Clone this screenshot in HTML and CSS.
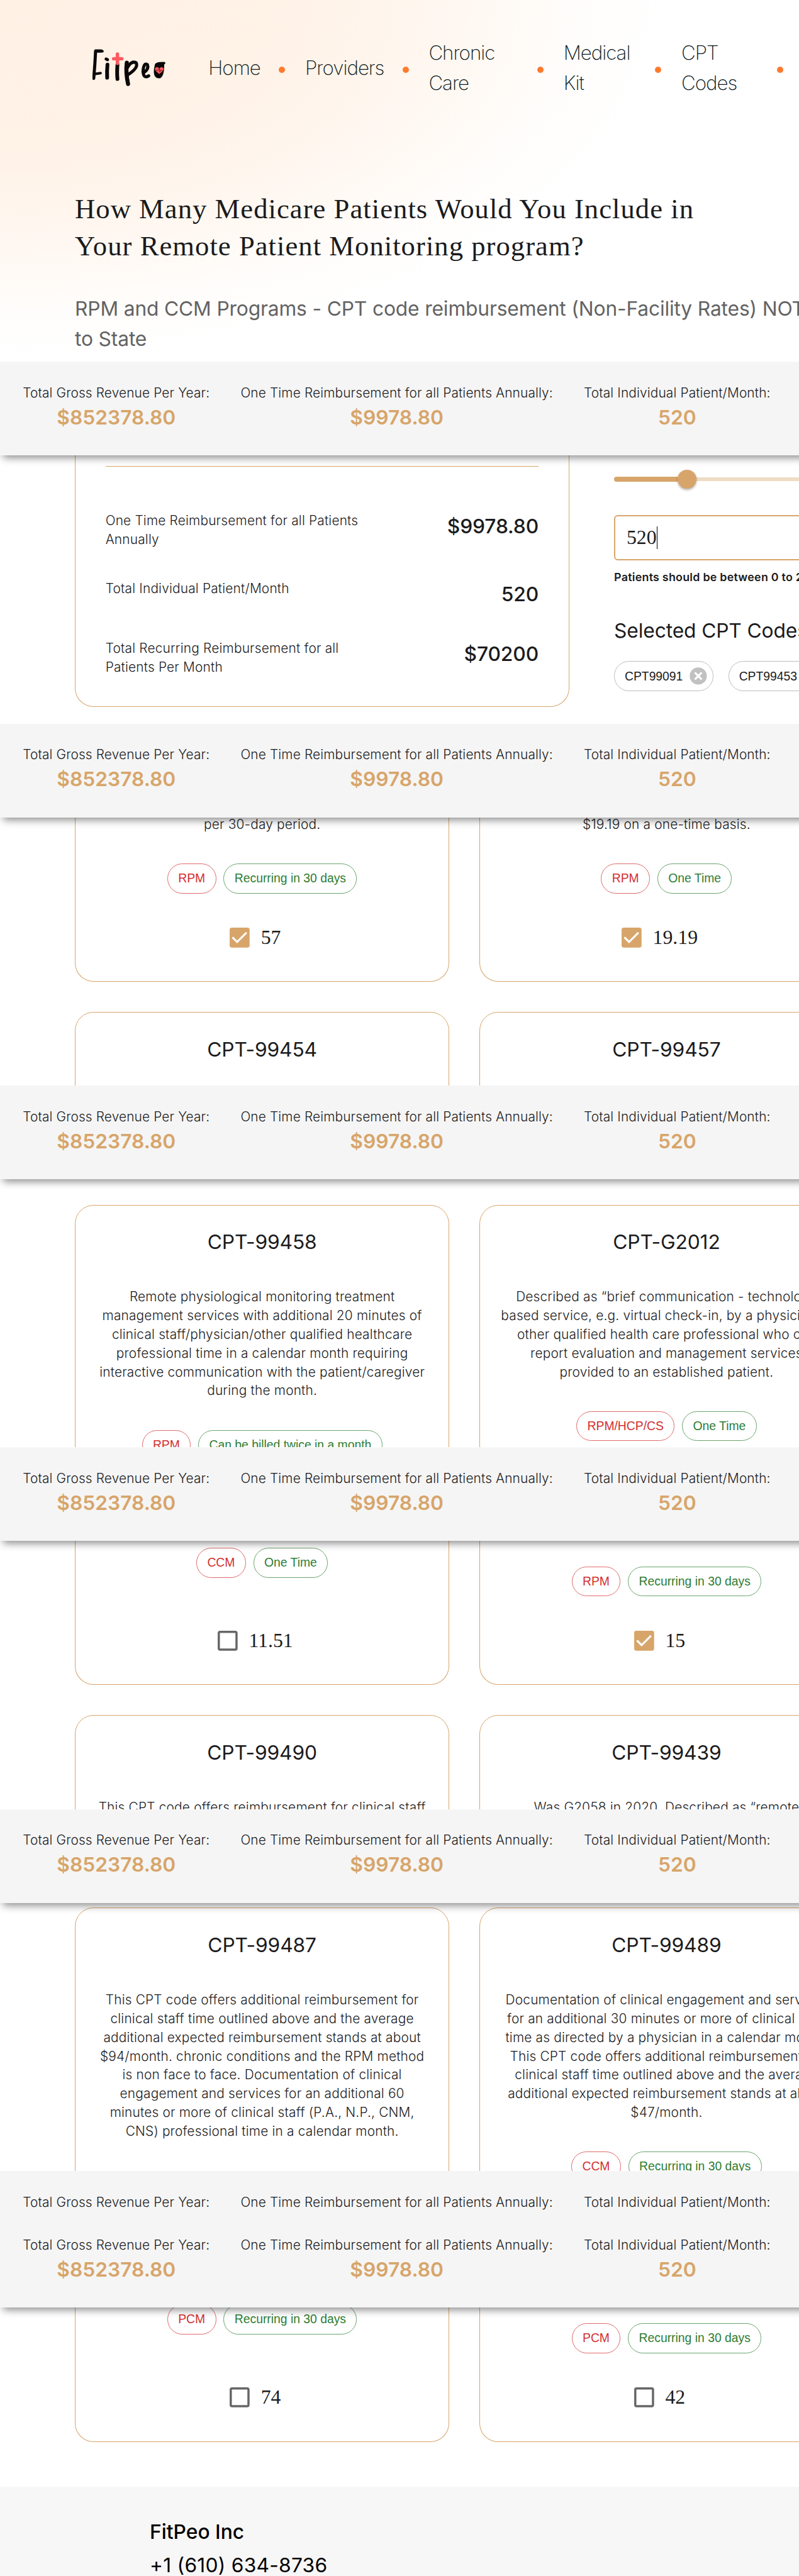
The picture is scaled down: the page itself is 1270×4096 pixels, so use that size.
FILE: index.html
```html
<!DOCTYPE html>
<html lang="en">
<head>
<meta charset="utf-8">
<title>FitPeo – Revenue Calculator</title>
<link rel="stylesheet" href="styles.css">
</head>
<body>
<div class="page">
  <header class="hero">
    <nav class="nav">
      <svg class="logo" viewBox="0 0 118 64" role="img" aria-label="FitPeo">
        <g fill="none" stroke="#0a0808" stroke-linecap="round" stroke-linejoin="round">
          <path d="M14 3 L5 3 Q4 25 2 47" stroke-width="5"/>
          <path d="M5 3.500H16" stroke-width="4"/>
          <path d="M3 40L13 38.500" stroke-width="4"/>
          <path d="M24 25Q23 35 23.500 46" stroke-width="6"/>
          <path d="M22 16L24 17" stroke-width="5"/>
          <path d="M40 25Q39 38 40 48" stroke-width="6"/>
          <path d="M55 22Q53 38 57 56" stroke-width="6.500"/>
          <path d="M56 30Q62 18 70 22Q74 30 57 41" stroke-width="5"/>
          <path d="M82 38Q91 32 88 25Q82 21 81 36Q82 48 90 43" stroke-width="5"/>
          <path d="M102 25Q97 45 107 45Q113 44 113 25Z" stroke-width="4" fill="#0a0808"/>
          <path d="M103 24Q106 22 115 22.500" stroke-width="3.500"/>
        </g>
        <path d="M40 8V23M34 15.500H47" stroke="#ff5a60" stroke-width="5.500" stroke-linecap="round"/>
        <path d="M107 40Q100 35 100 31Q103 27 107 31Q111 27 114 31Q114 35 107 40Z" fill="#ff5a60"/>
        <path d="M102 34H105L107 31L108 37L109 34H112" fill="none" stroke="#311" stroke-width=".8"/>
      </svg>
      <a class="link home">Home</a><i class="dot"></i>
      <a class="link providers">Providers</a><i class="dot"></i>
      <a class="link chronic">Chronic<br>Care</a><i class="dot"></i>
      <a class="link medical">Medical<br>Kit</a><i class="dot"></i>
      <a class="link codes">CPT<br>Codes</a><i class="dot"></i>
    </nav>
    <h1 class="headline">How Many Medicare Patients Would You Include in<br>Your Remote Patient Monitoring program?</h1>
    <p class="sub">RPM and CCM Programs - CPT code reimbursement (Non-Facility Rates) NOT<br>to State</p>
  </header>

  <div class="bar">
    <div class="stat"><span class="label">Total Gross Revenue Per Year:</span><b class="value">$852378.80</b></div>
    <div class="stat"><span class="label">One Time Reimbursement for all Patients Annually:</span><b class="value">$9978.80</b></div>
    <div class="stat"><span class="label">Total Individual Patient/Month:</span><b class="value">520</b></div>
  </div>

  <section class="slice calc">
    <div class="panel">
      <hr class="rule">
      <div class="row"><span class="what">One Time Reimbursement for all Patients Annually</span><span class="amount">$9978.80</span></div>
      <div class="row single"><span class="what">Total Individual Patient/Month</span><span class="amount">520</span></div>
      <div class="row"><span class="what narrow">Total Recurring Reimbursement for all Patients Per Month</span><span class="amount">$70200</span></div>
    </div>
    <div class="controls">
      <div class="slider"><div class="track"></div><div class="thumb"></div><div class="rail"></div></div>
      <div class="field"><span class="typed">520</span><i class="caret"></i></div>
      <p class="hint">Patients should be between 0 to 2000</p>
      <h2 class="selected">Selected CPT Codes:</h2>
      <div class="picked">
        <span class="pick">CPT99091<svg class="x" viewBox="0 0 28 28"><circle cx="14" cy="14" r="13.700" fill="#c1c1c1"/><path d="M8.500 8.500L19.500 19.500M19.500 8.500L8.500 19.500" stroke="#fff" stroke-width="3.200"/></svg></span>
        <span class="pick">CPT99453<svg class="x" viewBox="0 0 28 28"><circle cx="14" cy="14" r="13.700" fill="#c1c1c1"/><path d="M8.500 8.500L19.500 19.500M19.500 8.500L8.500 19.500" stroke="#fff" stroke-width="3.200"/></svg></span>
      </div>
    </div>
  </section>

  <div class="bar">
    <div class="stat"><span class="label">Total Gross Revenue Per Year:</span><b class="value">$852378.80</b></div>
    <div class="stat"><span class="label">One Time Reimbursement for all Patients Annually:</span><b class="value">$9978.80</b></div>
    <div class="stat"><span class="label">Total Individual Patient/Month:</span><b class="value">520</b></div>
  </div>

  <section class="slice">
    <div class="cards">
      <article class="card tail first">
        <p class="desc">per 30-day period.</p>
        <div class="tags"><span class="tag red">RPM</span><span class="tag green">Recurring in 30 days</span></div>
        <div class="check"><svg class="box" viewBox="0 0 32 32"><rect width="32" height="32" rx="3.500" fill="#d7a56a"/><path d="M4.500 15.500L12 23L27 8" fill="none" stroke="#fff" stroke-width="3.200"/></svg>57</div>
      </article>
      <article class="card tail first">
        <p class="desc">$19.19 on a one-time basis.</p>
        <div class="tags"><span class="tag red">RPM</span><span class="tag green">One Time</span></div>
        <div class="check"><svg class="box" viewBox="0 0 32 32"><rect width="32" height="32" rx="3.500" fill="#d7a56a"/><path d="M4.500 15.500L12 23L27 8" fill="none" stroke="#fff" stroke-width="3.200"/></svg>19.19</div>
      </article>
    </div>
    <div class="cards next">
      <article class="card open"><h3 class="code">CPT-99454</h3></article>
      <article class="card open"><h3 class="code">CPT-99457</h3></article>
    </div>
  </section>

  <div class="bar">
    <div class="stat"><span class="label">Total Gross Revenue Per Year:</span><b class="value">$852378.80</b></div>
    <div class="stat"><span class="label">One Time Reimbursement for all Patients Annually:</span><b class="value">$9978.80</b></div>
    <div class="stat"><span class="label">Total Individual Patient/Month:</span><b class="value">520</b></div>
  </div>

  <section class="slice physio">
    <div class="cards">
      <article class="card open">
        <h3 class="code">CPT-99458</h3>
        <p class="desc">Remote physiological monitoring treatment<br>management services with additional 20 minutes of<br>clinical staff/physician/other qualified healthcare<br>professional time in a calendar month requiring<br>interactive communication with the patient/caregiver<br>during the month.</p>
        <div class="tags"><span class="tag red">RPM</span><span class="tag green">Can be billed twice in a month</span></div>
      </article>
      <article class="card open">
        <h3 class="code">CPT-G2012</h3>
        <p class="desc">Described as “brief communication - technology<br>based service, e.g. virtual check-in, by a physician or<br>other qualified health care professional who can<br>report evaluation and management services<br>provided to an established patient.</p>
        <div class="tags"><span class="tag red">RPM/HCP/CS</span><span class="tag green">One Time</span></div>
      </article>
    </div>
  </section>

  <div class="bar">
    <div class="stat"><span class="label">Total Gross Revenue Per Year:</span><b class="value">$852378.80</b></div>
    <div class="stat"><span class="label">One Time Reimbursement for all Patients Annually:</span><b class="value">$9978.80</b></div>
    <div class="stat"><span class="label">Total Individual Patient/Month:</span><b class="value">520</b></div>
  </div>

  <section class="slice">
    <div class="cards">
      <article class="card tail ccm">
        <div class="tags"><span class="tag red">CCM</span><span class="tag green">One Time</span></div>
        <div class="check"><svg class="box" viewBox="0 0 32 32"><rect x="1.800" y="1.800" width="28.400" height="28.400" rx="2" fill="none" stroke="#666" stroke-width="3.500"/></svg>11.51</div>
      </article>
      <article class="card tail ccm">
        <div class="tags"><span class="tag red">RPM</span><span class="tag green">Recurring in 30 days</span></div>
        <div class="check"><svg class="box" viewBox="0 0 32 32"><rect width="32" height="32" rx="3.500" fill="#d7a56a"/><path d="M4.500 15.500L12 23L27 8" fill="none" stroke="#fff" stroke-width="3.200"/></svg>15</div>
      </article>
    </div>
    <div class="cards next">
      <article class="card open"><h3 class="code">CPT-99490</h3><p class="desc">This CPT code offers reimbursement for clinical staff</p></article>
      <article class="card open"><h3 class="code">CPT-99439</h3><p class="desc">Was G2058 in 2020. Described as “remote</p></article>
    </div>
  </section>

  <div class="bar">
    <div class="stat"><span class="label">Total Gross Revenue Per Year:</span><b class="value">$852378.80</b></div>
    <div class="stat"><span class="label">One Time Reimbursement for all Patients Annually:</span><b class="value">$9978.80</b></div>
    <div class="stat"><span class="label">Total Individual Patient/Month:</span><b class="value">520</b></div>
  </div>

  <section class="slice chronic-codes">
    <div class="cards">
      <article class="card open">
        <h3 class="code">CPT-99487</h3>
        <p class="desc">This CPT code offers additional reimbursement for<br>clinical staff time outlined above and the average<br>additional expected reimbursement stands at about<br>$94/month. chronic conditions and the RPM method<br>is non face to face. Documentation of clinical<br>engagement and services for an additional 60<br>minutes or more of clinical staff (P.A., N.P., CNM,<br>CNS) professional time in a calendar month.</p>
      </article>
      <article class="card open">
        <h3 class="code">CPT-99489</h3>
        <p class="desc">Documentation of clinical engagement and services<br>for an additional 30 minutes or more of clinical staff<br>time as directed by a physician in a calendar month.<br>This CPT code offers additional reimbursement for<br>clinical staff time outlined above and the average<br>additional expected reimbursement stands at about<br>$47/month.</p>
        <div class="tags"><span class="tag red">CCM</span><span class="tag green">Recurring in 30 days</span></div>
      </article>
    </div>
  </section>

  <div class="bar cut">
    <div class="stat"><span class="label">Total Gross Revenue Per Year:</span></div>
    <div class="stat"><span class="label">One Time Reimbursement for all Patients Annually:</span></div>
    <div class="stat"><span class="label">Total Individual Patient/Month:</span></div>
  </div>
  <div class="bar">
    <div class="stat"><span class="label">Total Gross Revenue Per Year:</span><b class="value">$852378.80</b></div>
    <div class="stat"><span class="label">One Time Reimbursement for all Patients Annually:</span><b class="value">$9978.80</b></div>
    <div class="stat"><span class="label">Total Individual Patient/Month:</span><b class="value">520</b></div>
  </div>

  <section class="slice last">
    <div class="cards">
      <article class="card tail pcm">
        <div class="tags"><span class="tag red">PCM</span><span class="tag green">Recurring in 30 days</span></div>
        <div class="check"><svg class="box" viewBox="0 0 32 32"><rect x="1.800" y="1.800" width="28.400" height="28.400" rx="2" fill="none" stroke="#666" stroke-width="3.500"/></svg>74</div>
      </article>
      <article class="card tail pcm">
        <div class="tags"><span class="tag red">PCM</span><span class="tag green">Recurring in 30 days</span></div>
        <div class="check"><svg class="box" viewBox="0 0 32 32"><rect x="1.800" y="1.800" width="28.400" height="28.400" rx="2" fill="none" stroke="#666" stroke-width="3.500"/></svg>42</div>
      </article>
    </div>
  </section>

  <footer class="footer">
    <strong class="company">FitPeo Inc</strong>
    <span class="phone">+1 (610) 634-8736</span>
  </footer>
</div>
</body>
</html>
```

FILE: styles.css
```css
* { box-sizing: border-box; }
body { margin: 0; background: #fff; overflow: hidden; }
.page {
  width: 1281px;
  height: 4129px;
  overflow: hidden;
  zoom: 0.992;
  font-family: Inter, "Liberation Sans", sans-serif;
  color: #1b1b1d;
}

/* header and intro */
.hero {
  height: 580px;
  padding: 64px 0 0 120px;
  overflow: hidden;
  background: radial-gradient(ellipse 1060px 570px at 0 0, #fff1e4 0, #fff2e7 42%, #fff7f0 66%, #fffdfb 88%, #fff 100%);
}
.nav { display: flex; align-items: center; width: 1400px; height: 96px; }
.logo { flex: none; width: 118px; height: 64px; margin: 0 68px 2px 28px; }
.link { flex: none; padding-bottom: 5px; font-size: 31.500px; line-height: 48px; font-weight: 200; color: #0c1a20; letter-spacing: -1px; }
.home { width: 113px; }
.providers { width: 156px; }
.chronic { width: 174px; }
.medical { width: 147px; }
.codes { width: 153px; }
.dot { flex: none; width: 10px; height: 10px; margin-right: 32px; border-radius: 50%; background: #ff7a2f; }
.headline {
  margin: 145px 0 0;
  font: 400 45px/60px "Liberation Serif", serif;
  letter-spacing: 1.05px;
  white-space: nowrap;
  color: #1b1b1d;
}
.sub { margin: 46px 0 0; font-size: 32px; line-height: 48px; font-weight: 400; letter-spacing: -.15px; white-space: nowrap; color: #636363; }

/* sticky totals */
.bar {
  position: relative;
  z-index: 1;
  display: flex;
  gap: 49.500px;
  height: 150px;
  margin-right: -20px;
  padding: 35px 0 0 36.500px;
  background: #f5f5f5;
  box-shadow: 0 9px 12px -5px rgba(0,0,0,.45);
  clip-path: inset(0 0 -40px 0);
}
.bar.cut { height: 69px; box-shadow: none; }
.stat { display: flex; flex: none; flex-direction: column; align-items: center; }
.label { font-size: 21px; line-height: 30px; font-weight: 300; letter-spacing: .007em; white-space: nowrap; }
.value { font-size: 32px; line-height: 48px; font-weight: 600; color: #d7a56a; }

/* calculator */
.slice { height: 430px; overflow: hidden; }
.calc { display: flex; gap: 72px; padding-left: 120px; }
.panel {
  flex: none;
  width: 792px;
  height: 403px;
  padding: 17px 48px 0;
  border: 1px solid #d7a56a;
  border-top: 0;
  border-radius: 0 0 30px 30px;
}
.rule { height: 1px; margin: 0; border: 0; background: #d7a56a; }
.row { display: flex; justify-content: space-between; height: 96px; }
.rule + .row { height: 180px; padding-top: 72px; }
.what { width: 416px; font-size: 21px; line-height: 30px; font-weight: 300; letter-spacing: .00938em; }
.what.narrow { width: 385px; }
.amount { font-size: 32px; line-height: 48px; font-weight: 500; letter-spacing: -.1px; }
.controls { flex: none; width: 640px; }
.slider { display: flex; align-items: center; height: 30px; margin-top: 23px; }
.track { width: 102px; height: 8px; border-radius: 4px 0 0 4px; background: #d7a56a; }
.thumb { z-index: 1; width: 30px; height: 30px; margin-right: -2px; border-radius: 50%; background: #d7a56a; box-shadow: 0 2px 4px rgba(0,0,0,.3); }
.rail { flex: 1; height: 6px; background: #efdcc5; }
.field { display: flex; align-items: center; height: 72px; margin-top: 43px; padding-left: 18px; border: 3px solid #d7a56a; border-radius: 6px; font: 32px/36px "Liberation Serif", serif; }
.caret { width: 1px; height: 36px; background: #000; }
.hint { margin: 12px 0 0; font-size: 18px; line-height: 30px; font-weight: 600; letter-spacing: .25px; }
.selected { margin: 47px 0 0; font-size: 32px; line-height: 48px; font-weight: 400; letter-spacing: -.12px; }
.picked { display: flex; gap: 24px; margin-top: 25px; }
.pick { display: flex; align-items: center; gap: 11px; height: 48px; padding: 0 9px 0 16px; border: 1px solid #bdbdbd; border-radius: 24px; font: 19.500px "Liberation Sans", sans-serif; }
.x { width: 28px; height: 28px; }

/* code cards */
.cards { display: flex; gap: 48px; padding-left: 120px; }
.cards.next { margin-top: 48px; }
.card { flex: none; width: 600px; border: 1px solid #d7a56a; border-radius: 30px; text-align: center; }
.card.tail { display: flex; flex-direction: column; justify-content: flex-end; padding-bottom: 54px; border-top: 0; border-radius: 0 0 30px 30px; }
.card.open { height: 520px; padding-top: 35px; }
.card.first { height: 264px; }
.card.ccm { height: 231px; }
.card.pcm { height: 215px; }
.code { margin: 0; font-size: 32px; line-height: 48px; font-weight: 400; letter-spacing: -.12px; }
.desc { margin: 0; font-size: 21px; line-height: 30px; font-weight: 300; letter-spacing: .00938em; white-space: nowrap; }
.code + .desc { margin-top: 49px; }
.tags { display: flex; justify-content: center; gap: 12px; margin-top: 48px; }
.tag { height: 48px; padding: 0 16.500px; border: 1px solid; border-radius: 24px; font: 19.500px/46px "Liberation Sans", sans-serif; }
.red { border-color: #e06b6b; color: #d32f2f; }
.green { border-color: #6aa56d; color: #2e7d32; }
.check { display: flex; align-items: center; justify-content: center; gap: 18px; height: 32px; margin: 55px 22px 0 0; font: 32px/32px "Liberation Serif", serif; }
.ccm:first-child .tags, .pcm:first-child .tags { margin-bottom: 30px; }
.box { width: 32px; height: 32px; }
.physio { padding-top: 41px; }
.chronic-codes { padding-top: 8px; }
.slice.last { height: 287px; }

/* footer */
.footer { display: flex; flex-direction: column; height: 143px; padding: 45px 0 0 240px; background: #f7f7f7; color: #000; font-size: 32px; line-height: 53.500px; white-space: nowrap; }
.company { font-weight: 500; }
.phone { font-weight: 400; letter-spacing: .0075em; }
```
